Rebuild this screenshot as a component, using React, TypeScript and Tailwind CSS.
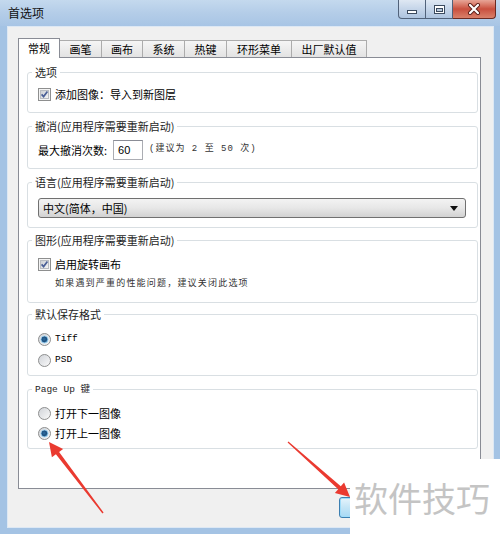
import React from "react";

const SANS = "font-['Noto_Sans_CJK_SC','Noto_Sans',sans-serif]";
const SONG = "font-['Liberation_Mono','Noto_Sans_CJK_SC',monospace]";

function Checkbox() {
  return (
    <svg width="13" height="13" viewBox="0 0 13 13" className="shrink-0">
      <defs>
        <linearGradient id="cbg" x1="0" y1="0" x2="1" y2="1">
          <stop offset="0" stopColor="#c9cdd3" />
          <stop offset="1" stopColor="#f7f7f7" />
        </linearGradient>
      </defs>
      <rect x="0.5" y="0.5" width="12" height="12" fill="#f4f4f4" stroke="#8e8f8f" />
      <rect x="2.5" y="2.5" width="8" height="8" fill="url(#cbg)" stroke="#b9bcc2" />
      <path d="M3.6 6.4 L5.6 8.6 L9.4 3.6" fill="none" stroke="#4a5f97" strokeWidth="1.7" />
    </svg>
  );
}

function Radio({ checked }: { checked?: boolean }) {
  return (
    <svg width="13" height="13" viewBox="0 0 13 13" className="shrink-0">
      <defs>
        <linearGradient id="rbg" x1="0" y1="0" x2="1" y2="1">
          <stop offset="0" stopColor="#cfd2d7" />
          <stop offset="1" stopColor="#fbfbfb" />
        </linearGradient>
        <radialGradient id="rdot" cx="0.45" cy="0.45" r="0.6">
          <stop offset="0" stopColor="#2f6fa3" />
          <stop offset="0.55" stopColor="#1d4f7e" />
          <stop offset="1" stopColor="#7fc0e8" />
        </radialGradient>
      </defs>
      <circle cx="6.5" cy="6.5" r="6" fill="url(#rbg)" stroke="#8e8f8f" />
      {checked && <circle cx="6.5" cy="6.5" r="3.6" fill="url(#rdot)" stroke="#9fd3f2" strokeWidth="0.8" />}
    </svg>
  );
}

const tabs: [string, number][] = [
  ["常规", 42],
  ["画笔", 42],
  ["画布", 41],
  ["系统", 42],
  ["热键", 42],
  ["环形菜单", 65],
  ["出厂默认值", 75],
];

function Group({
  title,
  h,
  mt,
  mono,
  children,
}: {
  title: React.ReactNode;
  h: string;
  mt: string;
  mono?: boolean;
  children: React.ReactNode;
}) {
  return (
    <fieldset className={`border border-[#d9dfe3] rounded-[3px] p-0 ${h} ${mt}`}>
      <legend className={`ml-[4px] px-[3px] leading-[16px] text-[#1e1e1e] ${mono ? "text-[9.5px]" : "text-[11px]"}`}>
        {title}
      </legend>
      {children}
    </fieldset>
  );
}

export default function App() {
  return (
    <div className={`w-[500px] h-[534px] relative overflow-hidden bg-[#a4c3e4] flex flex-col text-black ${SANS}`}>
      {/* Title bar */}
      <div className="h-[26px] shrink-0 flex items-start bg-gradient-to-b from-[#c4d9ee] via-[#b4cde8] to-[#a8c5e5]">
        <span className="pl-[8px] pt-[5px] text-[12px] leading-[16px] text-[#111]">首选项</span>
        <div className="ml-auto mr-[4px] flex h-[19px]">
          <div className="w-[28px] h-[19px] border border-t-0 border-[#51627a] rounded-bl-[4px] bg-gradient-to-b from-[#dfe8f3] via-[#c5d5e9] to-[#aec4df] flex items-end justify-center pb-[4px]">
            <div className="w-[10px] h-[4px] bg-white border border-[#3b4a5e]" />
          </div>
          <div className="w-[27px] h-[19px] border border-l-0 border-t-0 border-[#51627a] bg-gradient-to-b from-[#dfe8f3] via-[#c5d5e9] to-[#aec4df] flex items-center justify-center">
            <div className="w-[11px] h-[9px] border border-[#3b4a5e] bg-white flex items-center justify-center">
              <div className="w-[7px] h-[4px] mt-[1px] bg-[#b8c9dd] border border-[#3b4a5e]" />
            </div>
          </div>
          <div className="w-[43px] h-[19px] border border-l-0 border-t-0 border-[#6b2a22] rounded-br-[4px] bg-gradient-to-b from-[#e7a597] via-[#c94f3e] to-[#d9806a] flex items-center justify-center">
            <svg width="14" height="12" viewBox="0 0 14 12">
              <path d="M3 2 L11 10 M11 2 L3 10" stroke="#5a1e18" strokeWidth="4" strokeLinecap="round" />
              <path d="M3 2 L11 10 M11 2 L3 10" stroke="#ffffff" strokeWidth="2.2" strokeLinecap="round" />
            </svg>
          </div>
        </div>
      </div>

      {/* Client area */}
      <div className="flex-1 ml-[7px] mr-[6px] mb-[6px] bg-[#f0f0f0] border border-[#dde8f4] flex flex-col">
        {/* Tabs */}
        <div className="ml-[10px] mt-[11px] h-[19px] flex items-end relative z-10">
          {tabs.map(([label, w], i) =>
            i === 0 ? (
              <div
                key={label}
                style={{ width: w }}
                className="h-[20px] -mb-px bg-white border border-b-0 border-[#898c95] flex items-center justify-center pb-[2px] text-[11px] leading-[14px]"
              >
                {label}
              </div>
            ) : (
              <div
                key={label}
                style={{ width: w }}
                className="h-[17px] border-t border-r border-[#acacac] bg-gradient-to-b from-[#f5f5f5] to-[#e3e3e3] flex items-center justify-center text-[11px] leading-[14px]"
              >
                {label}
              </div>
            )
          )}
        </div>

        {/* Panel */}
        <div className="ml-[10px] w-[463px] h-[432px] bg-white border border-[#898c95] pt-[6px] pl-[8px] pr-[2px] flex flex-col">
          <Group title="选项" h="h-[49px]" mt="mt-0">
            <div className="flex items-center h-[16px] pl-[10px] mt-[6px] gap-[4px] text-[11px]">
              <Checkbox />
              <span>添加图像：导入到新图层</span>
            </div>
          </Group>

          <Group title="撤消(应用程序需要重新启动)" h="h-[51px]" mt="mt-[5px]">
            <div className="flex items-center h-[20px] pl-[10px] mt-[6px] text-[11px]">
              <span>最大撤消次数:</span>
              <div className="ml-[6px] w-[30px] h-[20px] border border-[#abadb3] border-t-[#8a8d96] bg-white flex items-center pl-[4px] text-[11px] font-['Liberation_Sans',sans-serif]">
                60
              </div>
              <span className={`ml-[6px] text-[9px] tracking-[1px] text-[#333] ${SONG}`}>(建议为 2 至 50 次)</span>
            </div>
          </Group>

          <Group title="语言(应用程序需要重新启动)" h="h-[54px]" mt="mt-[5px]">
            <div className="pl-[10px] pr-[10px] mt-[8px]">
              <div className="h-[20px] w-[428px] rounded-[3px] border border-[#707070] bg-gradient-to-b from-[#f3f3f3] via-[#e7e7e7] to-[#d2d2d2] flex items-center pl-[4px] pr-[7px] text-[11px]">
                <span>中文(简体，中国)</span>
                <svg className="ml-auto" width="8" height="5" viewBox="0 0 8 5">
                  <path d="M0 0 H8 L4 5 Z" fill="#111" />
                </svg>
              </div>
            </div>
          </Group>

          <Group title="图形(应用程序需要重新启动)" h="h-[71px]" mt="mt-[4px]">
            <div className="flex items-center h-[16px] pl-[10px] mt-[8px] gap-[4px] text-[11px]">
              <Checkbox />
              <span>启用旋转画布</span>
            </div>
            <div className={`h-[16px] mt-[5px] ml-[27px] flex items-center text-[9px] tracking-[1.2px] text-[#333] ${SONG}`}>
              如果遇到严重的性能问题，建议关闭此选项
            </div>
          </Group>

          <Group title="默认保存格式" h="h-[70px]" mt="mt-[3px]">
            <div className="flex items-center h-[16px] pl-[10px] mt-[9px] gap-[4px]">
              <Radio checked />
              <span className={`text-[9.5px] ${SONG}`}>Tiff</span>
            </div>
            <div className="flex items-center h-[16px] pl-[10px] mt-[5px] gap-[4px]">
              <Radio />
              <span className={`text-[9.5px] ${SONG}`}>PSD</span>
            </div>
          </Group>

          <Group title={<span className={SONG}>Page Up 键</span>} h="h-[69px]" mt="mt-[4px]" mono>
            <div className="flex items-center h-[16px] pl-[10px] mt-[7px] gap-[4px] text-[11px]">
              <Radio />
              <span>打开下一图像</span>
            </div>
            <div className="flex items-center h-[16px] pl-[10px] mt-[4px] gap-[4px] text-[11px]">
              <Radio checked />
              <span>打开上一图像</span>
            </div>
          </Group>
        </div>

        {/* Bottom buttons */}
        <div className="flex mt-[8px] pl-[331px]">
          <div className="w-[75px] h-[21px] rounded-[3px] border border-[#3c7fb1] bg-gradient-to-b from-[#e5f4fc] via-[#c4e5f6] to-[#a7d9f5] shadow-[inset_0_0_0_1px_#9fdcf9]" />
        </div>
      </div>

      {/* Watermark */}
      <div className="absolute left-[350px] top-[459px] w-[150px] h-[75px] bg-white pt-[22px] pl-[4px]">
        <span className={`text-[34px] leading-[34px] text-[#c4c4c4] whitespace-nowrap ${SANS}`}>软件技巧</span>
      </div>

      {/* Red arrows */}
      <svg className="absolute left-0 top-0 pointer-events-none" width="500" height="534" viewBox="0 0 500 534">
        <polygon
          points="49,442 63.1,448.9 59.1,451.9 103.6,512.6 102.4,513.4 55.9,454.3 51.9,457.3"
          fill="#ea3a30"
        />
        <polygon
          points="350,497 334.9,492.9 338.2,489.2 287.6,442.6 288.4,441.4 340.8,486.2 344.1,482.5"
          fill="#ea3a30"
        />
      </svg>
    </div>
  );
}
